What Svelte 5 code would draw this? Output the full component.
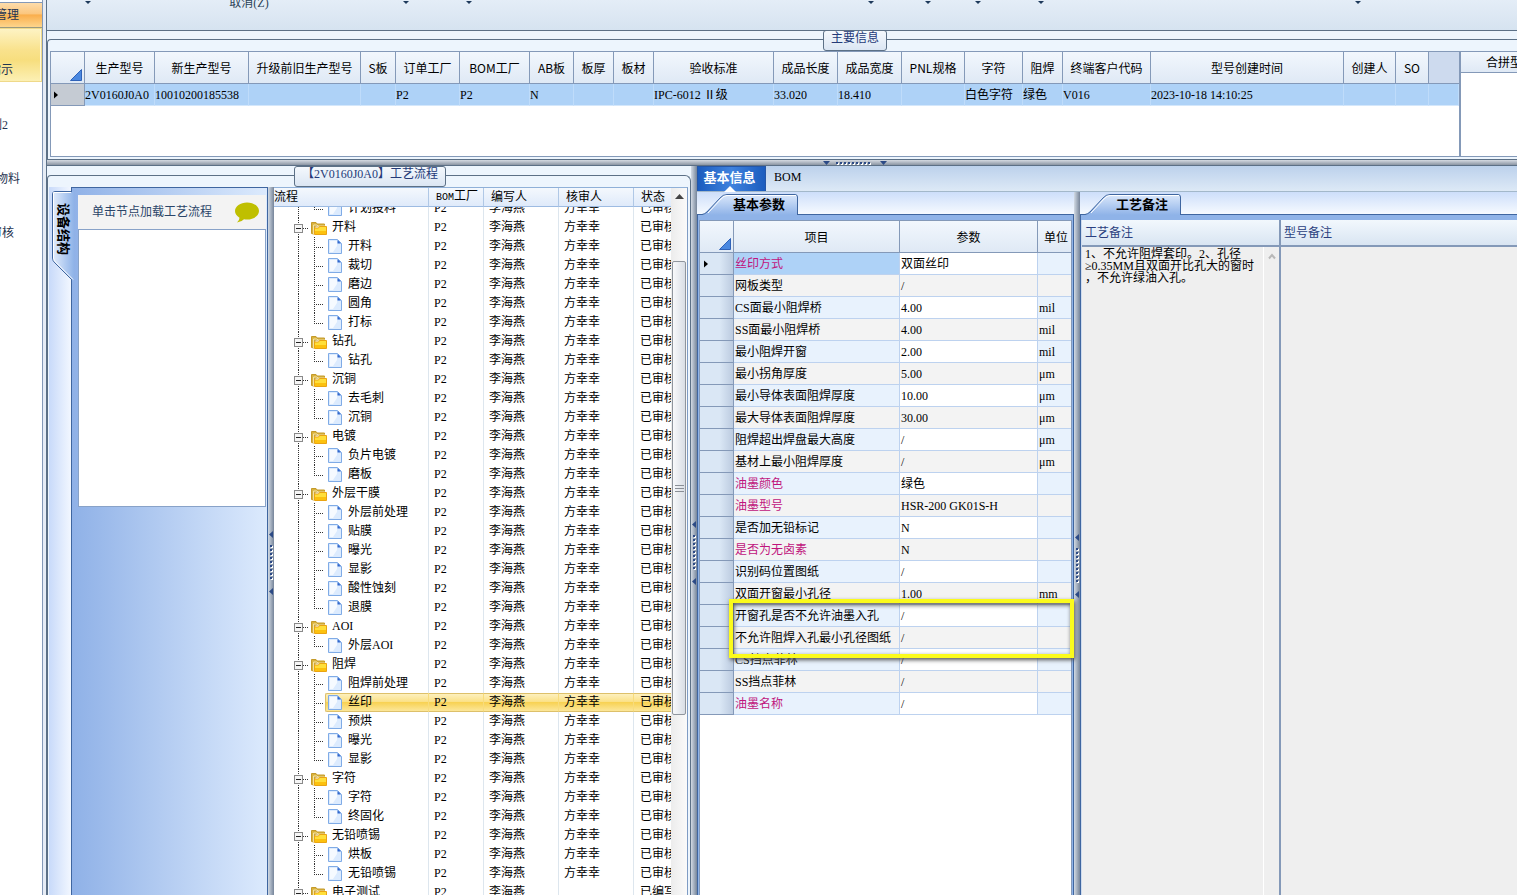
<script>
  const ribbon = [
    { width: 82, caret: true },
    { width: 240, text: '取消(Z)' },
    { width: 74, caret: true },
    { width: 52, caret: true },
    { width: 348 },
    { width: 56, caret: true },
    { width: 58, caret: true },
    { width: 42, caret: true },
    { width: 84, caret: true },
    { width: 240 },
    { width: 70, caret: true },
  ];

  const navItems = ['指示', '例2', '物料', '审核'];

  const mainColumns = [
    { name: '生产型号', width: 70, value: '2V0160J0A0' },
    { name: '新生产型号', width: 94, value: '10010200185538' },
    { name: '升级前旧生产型号', width: 112, value: '' },
    { name: 'S板', width: 35, value: '' },
    { name: '订单工厂', width: 64, value: 'P2' },
    { name: 'BOM工厂', width: 70, value: 'P2' },
    { name: 'AB板', width: 44, value: 'N' },
    { name: '板厚', width: 40, value: '' },
    { name: '板材', width: 40, value: '' },
    { name: '验收标准', width: 120, value: 'IPC-6012 Ⅱ级' },
    { name: '成品长度', width: 64, value: '33.020' },
    { name: '成品宽度', width: 64, value: '18.410' },
    { name: 'PNL规格', width: 63, value: '' },
    { name: '字符', width: 58, value: '白色字符' },
    { name: '阻焊', width: 40, value: '绿色' },
    { name: '终端客户代码', width: 88, value: 'V016' },
    { name: '型号创建时间', width: 193, value: '2023-10-18 14:10:25' },
    { name: '创建人', width: 52, value: '' },
    { name: 'SO', width: 33, value: '' },
  ];

  const processes = [
    { name: '', steps: ['计划投料'] },
    { name: '开料', steps: ['开料', '裁切', '磨边', '圆角', '打标'] },
    { name: '钻孔', steps: ['钻孔'] },
    { name: '沉铜', steps: ['去毛刺', '沉铜'] },
    { name: '电镀', steps: ['负片电镀', '磨板'] },
    { name: '外层干膜', steps: ['外层前处理', '贴膜', '曝光', '显影', '酸性蚀刻', '退膜'] },
    { name: 'AOI', steps: ['外层AOI'] },
    { name: '阻焊', steps: ['阻焊前处理', '丝印', '预烘', '曝光', '显影'] },
    { name: '字符', steps: ['字符', '终固化'] },
    { name: '无铅喷锡', steps: ['烘板', '无铅喷锡'] },
    { name: '电子测试', steps: [], reviewer: '', state: '已编写' },
  ];

  const rows = processes.flatMap((p) => {
    const base = { reviewer: p.reviewer ?? '方幸幸', state: p.state ?? '已审核' };
    const steps = p.steps.map((name, i) => ({ ...base, name, last: i === p.steps.length - 1 }));
    return p.name ? [{ ...base, name: p.name, group: true }, ...steps] : steps;
  });

  let selected = $state('丝印');

  const params = [
    { name: '丝印方式', value: '双面丝印', key: true },
    { name: '网板类型', value: '/' },
    { name: 'CS面最小阻焊桥', value: '4.00', unit: 'mil' },
    { name: 'SS面最小阻焊桥', value: '4.00', unit: 'mil' },
    { name: '最小阻焊开窗', value: '2.00', unit: 'mil' },
    { name: '最小拐角厚度', value: '5.00', unit: 'μm' },
    { name: '最小导体表面阻焊厚度', value: '10.00', unit: 'μm' },
    { name: '最大导体表面阻焊厚度', value: '30.00', unit: 'μm' },
    { name: '阻焊超出焊盘最大高度', value: '/', unit: 'μm' },
    { name: '基材上最小阻焊厚度', value: '/', unit: 'μm' },
    { name: '油墨颜色', value: '绿色', key: true },
    { name: '油墨型号', value: 'HSR-200 GK01S-H', key: true },
    { name: '是否加无铅标记', value: 'N' },
    { name: '是否为无卤素', value: 'N', key: true },
    { name: '识别码位置图纸', value: '/' },
    { name: '双面开窗最小孔径', value: '1.00', unit: 'mm' },
    { name: '开窗孔是否不允许油墨入孔', value: '/' },
    { name: '不允许阻焊入孔最小孔径图纸', value: '/' },
    { name: 'CS挡点菲林', value: '/' },
    { name: 'SS挡点菲林', value: '/' },
    { name: '油墨名称', value: '/', key: true },
  ];

  let processNote = $state('1、不允许阻焊套印。2、孔径\n≥0.35MM且双面开比孔大的窗时\n，不允许绿油入孔。');
  let modelNote = $state('');
</script>

{#snippet corner()}
  <svg class="corner" width="12" height="12" viewBox="0 0 12 12">
    <path d="M11.5 0.5V11.5H0.5Z" fill="#4a88e0" stroke="#2f62b8" />
  </svg>
{/snippet}

{#snippet pointer()}
  <svg class="pointer" width="4" height="8" viewBox="0 0 4 8"><path d="M0 0.5L4 4L0 7.5Z" fill="#000" /></svg>
{/snippet}

{#snippet grip()}
  <div class="splitter">
    <svg width="6" height="64" viewBox="0 0 6 64">
      <path d="M5 0V7L1 3.5Z M5 57V64L1 60.5Z" fill="#2c4a86" />
      <path d="M3 14V48" stroke="#fff" stroke-width="2" stroke-dasharray="2 2" transform="translate(1 1)" />
      <path d="M3 14V48" stroke="#2c4a86" stroke-width="2" stroke-dasharray="2 2" />
    </svg>
  </div>
{/snippet}

{#snippet pageTab(text)}
  <div class="tab-strip">
    <button class="page-tab">
      <svg width="97" height="21" viewBox="0 0 97 21">
        <defs>
          <linearGradient id="tabFill" x1="0" y1="0" x2="0" y2="1">
            <stop offset="0" stop-color="#dbe8fb" />
            <stop offset="1" stop-color="#8fb3e8" />
          </linearGradient>
        </defs>
        <path d="M0 21L3 19L18 4Q21 0.5 25 0.5H93Q95.500 0.5 95.500 3V21Z" fill="url(#tabFill)" />
        <path d="M0 20.500Q3 20 5 18L18 4Q21 0.500 25 0.500H93Q95.500 0.500 95.500 3V21" fill="none" stroke="#3f66a0" />
        <path d="M6 19L19 5Q22 1.500 25 1.500H94" fill="none" stroke="#fff" />
      </svg>
      <span>{text}</span>
    </button>
  </div>
{/snippet}

<div class="app">
  <nav class="sidebar">
    <button class="nav-head">管理</button>
    {#each navItems as item, i}
      <button class="nav-item" class:active={i === 0}>{item}</button>
    {/each}
  </nav>

  <main>
    <div class="ribbon">
      {#each ribbon as item}
        <div class="ribbon-cell" style="width: {item.width}px">
          {#if item.text}
            <button>{item.text}</button>
          {:else if item.caret}
            <button aria-label="展开">
              <svg width="6" height="3" viewBox="0 0 6 3"><path d="M0 0H6L3 3Z" fill="#1e3a5c" /></svg>
            </button>
          {/if}
        </div>
      {/each}
    </div>

    <section class="top-panel">
      <h2 class="legend top-legend">主要信息</h2>
      <div class="group">
        <div class="top-grids">
          <div class="main-grid">
            <table>
              <colgroup>
                <col class="row-head" />
                {#each mainColumns as col}<col style="width: {col.width}px" />{/each}
                <col />
              </colgroup>
              <thead>
                <tr>
                  <th class="corner-cell">{@render corner()}</th>
                  {#each mainColumns as col}<th>{col.name}</th>{/each}
                  <th class="filler"></th>
                </tr>
              </thead>
              <tbody>
                <tr>
                  <td class="marker">{@render pointer()}</td>
                  {#each mainColumns as col}<td>{col.value}</td>{/each}
                  <td></td>
                </tr>
              </tbody>
            </table>
          </div>
          <div class="merge-grid">
            <div class="merge-head">合拼型号</div>
          </div>
        </div>
      </div>
    </section>

    <div class="h-splitter">
      <svg width="64" height="6" viewBox="0 0 64 6">
        <path d="M0 1H7L3.500 5Z M57 1H64L60.500 5Z" fill="#2c4a86" />
        <path d="M14 4H50" stroke="#fff" stroke-width="2" stroke-dasharray="2 2" />
        <path d="M13 3H49" stroke="#2c4a86" stroke-width="2" stroke-dasharray="2 2" />
      </svg>
    </div>

    <div class="lower">
      <section class="flow-panel">
        <h2 class="legend flow-legend">【2V0160J0A0】工艺流程</h2>
        <div class="group flow-group">
          <div class="side-strip">
            <button class="side-tab">
              <svg width="22" height="92" viewBox="0 0 22 92">
                <defs>
                  <linearGradient id="sideFill" x1="0" y1="0" x2="1" y2="0">
                    <stop offset="0" stop-color="#e3edfc" />
                    <stop offset="1" stop-color="#8fb3e8" />
                  </linearGradient>
                </defs>
                <path d="M22 0.500H3Q0.500 0.500 0.500 3V67Q0.500 70 3 72L21 90L22 91Z" fill="url(#sideFill)" />
                <path d="M20 0.500H3Q0.500 0.500 0.500 3V67Q0.500 70 3 72L20 89" fill="none" stroke="#3f66a0" />
                <path d="M19 1.500H1.500V67Q2 70 4 71.500L21 88.500" fill="none" stroke="#fff" />
              </svg>
              <span>设备结构</span>
            </button>
          </div>
          <div class="device">
            <div class="device-head">
              <span>单击节点加载工艺流程</span>
              <svg width="24" height="21" viewBox="0 0 24 21">
                <path d="M12 0.500C18.600 0.500 24 4.200 24 9S18.600 17.500 12 17.500Q10.500 17.500 9 17.200Q6.500 20 2 20.500Q4.500 18.500 4.500 15.700C1.800 14 0 11.700 0 9C0 4.200 5.400 0.500 12 0.500Z" fill="#bfbf00" />
              </svg>
            </div>
            <div class="device-body"></div>
          </div>
          {@render grip()}
          <div class="tree">
            <div class="tree-main">
              <table class="tree-head">
                <colgroup><col class="c-name" /><col class="c-plant" /><col class="c-user" /><col class="c-user" /><col /></colgroup>
                <thead>
                  <tr><th>流程</th><th><span class="mono">BOM</span>工厂</th><th>编写人</th><th>核审人</th><th>状态</th></tr>
                </thead>
              </table>
              <div class="tree-body">
                <table class="tree-rows">
                  <colgroup><col class="c-name" /><col class="c-plant" /><col class="c-user" /><col class="c-user" /><col /></colgroup>
                  <tbody>
                    {#each rows as row}
                      <tr class:selected={row.name === selected} onclick={() => (selected = row.name)}>
                        <td>
                          <div class="node">
                            {#if row.group}
                              <svg width="37" height="19" viewBox="0 0 37 19">
                                <path d="M24.500 0V19M29 10.500H35" stroke="#333" stroke-dasharray="1 1" />
                                <rect x="20.500" y="6.500" width="8" height="8" fill="#f6f6f6" stroke="#8a8a8a" />
                                <path d="M22 10.500H27" stroke="#222" />
                              </svg>
                              <svg width="17" height="19" viewBox="0 0 17 19">
                                <path d="M0.500 15.500V4.500H5L6 6H13.500V8H4L3 16Z" fill="#d9b23c" stroke="#c49a2a" />
                                <path d="M2.500 16V7H6L7 8H14" fill="none" stroke="#f3e3a6" />
                                <path d="M3.500 10H7.500L8.500 8.500H15.500V16.500H3.500Z" fill="#ffdf3a" stroke="#eaa412" />
                                <path d="M4 13H15V16H4Z" fill="#fcc10e" />
                              </svg>
                              <span class="group-name">{row.name}</span>
                            {:else}
                              <svg width="51" height="19" viewBox="0 0 51 19">
                                <path d="M24.500 0V19" stroke="#333" stroke-dasharray="1 1" />
                                <path d={row.last ? 'M40.500 0V11' : 'M40.500 0V19'} stroke="#333" stroke-dasharray="1 1" />
                                <path d="M42 10.500H50" stroke="#333" stroke-dasharray="1 1" />
                              </svg>
                              <span class="leaf">
                                <svg width="14" height="17" viewBox="0 0 14 17">
                                  <path d="M0.500 1.500H9.500L13.500 5.500V15.500H0.500Z" fill="#dcebfe" stroke="#7fabe6" stroke-linejoin="round" />
                                  <path d="M2 3H9V8L5 14H2Z" fill="#f6faff" />
                                  <path d="M9.500 2V5.500H13Z" fill="#2f66cc" />
                                </svg>
                                {row.name}
                              </span>
                            {/if}
                          </div>
                        </td>
                        <td>P2</td>
                        <td>李海燕</td>
                        <td>{row.reviewer}</td>
                        <td>{row.state}</td>
                      </tr>
                    {/each}
                  </tbody>
                </table>
              </div>
            </div>
            <div class="scrollbar">
              <button aria-label="向上滚动">
                <svg width="9" height="5" viewBox="0 0 9 5"><path d="M4.500 0L9 5H0Z" fill="#444" /></svg>
              </button>
              <div class="thumb">
                <svg width="9" height="7" viewBox="0 0 9 7"><path d="M0 0.500H9M0 3.500H9M0 6.500H9" stroke="#8a8f96" /></svg>
              </div>
            </div>
          </div>
        </div>
      </section>

      {@render grip()}

      <section class="info-panel">
        <div class="info-tabs">
          <button class="info-tab active">
            基本信息
            <svg width="12" height="6" viewBox="0 0 12 6"><path d="M6 0L12 6H0Z" fill="#fff" /></svg>
          </button>
          <button class="info-tab">BOM</button>
        </div>
        <div class="info-body">
          <div class="param-panel">
            {@render pageTab('基本参数')}
            <div class="param-frame">
              <div class="param-grid">
                <table>
                  <colgroup><col class="row-head" /><col class="p-name" /><col class="p-value" /><col /></colgroup>
                  <thead>
                    <tr>
                      <th class="corner-cell">{@render corner()}</th>
                      <th>项目</th>
                      <th>参数</th>
                      <th class="unit-head">单位</th>
                    </tr>
                  </thead>
                  <tbody>
                    {#each params as p, i}
                      <tr class:current={i === 0}>
                        <td class="marker">{#if i === 0}{@render pointer()}{/if}</td>
                        <td class:key={p.key}>{p.name}</td>
                        <td class="value">{p.value}</td>
                        <td>{p.unit ?? ''}</td>
                      </tr>
                    {/each}
                  </tbody>
                </table>
                <div class="highlight"></div>
              </div>
            </div>
          </div>

          {@render grip()}

          <div class="note-panel">
            {@render pageTab('工艺备注')}
            <div class="notes">
              <div class="note process">
                <label for="process-note">工艺备注</label>
                <div class="note-body">
                  <textarea id="process-note" bind:value={processNote}></textarea>
                  <button class="note-scroll" aria-label="向上滚动">
                    <svg width="8" height="7" viewBox="0 0 8 7"><path d="M1 5.500L4 2L7 5.500" fill="none" stroke="#b8b8b8" stroke-width="2" /></svg>
                  </button>
                </div>
              </div>
              <div class="note model">
                <label for="model-note">型号备注</label>
                <div class="note-body">
                  <textarea id="model-note" bind:value={modelNote}></textarea>
                </div>
              </div>
            </div>
          </div>
        </div>
      </section>
    </div>
  </main>
</div>

<style>
  :global(body) {
    margin: 0;
    overflow: hidden;
  }

  .app {
    --song: "Liberation Serif", "Noto Sans CJK SC", sans-serif;
    --hei: "Noto Sans CJK SC", sans-serif;
    --line: #8499b8;
    --edge: #5c7086;
    --blue-edge: #3f66a0;
    display: flex;
    height: 100vh;
    overflow: hidden;
    font: 12px/18px var(--song);
    color: #000;
    background: #fff;
  }

  .app :global(*) {
    box-sizing: border-box;
  }

  button {
    margin: 0;
    padding: 0;
    border: 0;
    background: none;
    font: inherit;
    color: inherit;
  }

  svg {
    display: block;
    flex: none;
  }

  table {
    width: 100%;
    table-layout: fixed;
    border-collapse: separate;
    border-spacing: 0;
  }

  th,
  td {
    padding: 0;
    overflow: hidden;
    white-space: nowrap;
    text-align: left;
    font-weight: normal;
  }

  .mono {
    font-family: "Liberation Mono", monospace;
    font-size: 10px;
  }

  /* Sidebar */
  .sidebar {
    flex: none;
    width: 47px;
    padding-top: 2px;
    padding-right: 4px;
    border-right: 1px solid var(--edge);
    background: linear-gradient(90deg, #fff 42px, #8499b8 42px, #8499b8 43px, #e6ecf5 43px);
    color: #1e3350;
  }

  .nav-head,
  .nav-item {
    display: flex;
    justify-content: flex-end;
    width: 42px;
    overflow: hidden;
    white-space: nowrap;
  }

  .nav-head {
    align-items: center;
    height: 26px;
    padding-right: 23px;
    border-top: 1px solid #8499b8;
    border-bottom: 1px solid #9a9a80;
    background: linear-gradient(#fddcab, #fbc67e 45%, #faae4c 50%, #fdd58c);
  }

  .nav-item {
    align-items: flex-end;
    height: 54px;
    padding: 0 28px 2px 0;
  }

  .nav-item:nth-child(3) {
    padding-right: 34px;
  }

  .nav-item:nth-child(4) {
    padding-right: 22px;
  }

  .nav-item.active {
    border: 1px solid #efd98a;
    border-left: 0;
    box-shadow: inset -1px 0 #fff8d8;
    background: linear-gradient(#fdf3c4, #f9e28d 40%, #f7de7e 60%, #fcf0b4);
  }

  main {
    flex: 1;
    min-width: 0;
    display: flex;
    flex-direction: column;
    background: #eaf3fc;
  }

  /* Ribbon */
  .ribbon {
    display: flex;
    flex: none;
    height: 31px;
    overflow: hidden;
    border-bottom: 1px solid var(--edge);
    background: linear-gradient(#e4edf7, #d6e3f0);
  }

  .ribbon-cell {
    flex: none;
    display: flex;
    justify-content: center;
    align-items: flex-start;
    color: #2b4257;
  }

  .ribbon-cell button {
    display: flex;
    height: 18px;
    margin-top: -6px;
  }

  .ribbon-cell svg {
    margin-top: 7px;
  }

  /* Framed groups with a caption on the border */
  .top-panel,
  .flow-panel {
    position: relative;
    padding-top: 8px;
    background: #edf5fd;
  }

  .top-panel {
    flex: none;
    border-bottom: 1px solid var(--edge);
  }

  .group {
    padding: 11px 0 2px 2px;
    border: 1px solid var(--edge);
    border-right: 0;
    border-bottom: 0;
    border-radius: 4px 0 0 0;
  }

  .legend {
    position: absolute;
    z-index: 1;
    top: -1px;
    margin: 0;
    height: 21px;
    padding: 0 7px;
    border: 1px solid var(--edge);
    border-radius: 3px;
    background: linear-gradient(#f4f8fd, #dbe6f3);
    font-size: 12px;
    font-weight: normal;
    line-height: 15px;
    color: #243a78;
  }

  .top-legend {
    left: 776px;
  }

  .flow-legend {
    left: 247px;
    top: 0;
  }

  .top-grids {
    display: flex;
    height: 106px;
    border: 1px solid var(--line);
    border-right: 0;
    background: #fff;
  }

  .main-grid {
    flex: none;
    width: 1408px;
  }

  .row-head {
    width: 34px;
  }

  .main-grid th,
  .param-grid th {
    height: 32px;
    border-right: 1px solid var(--line);
    border-bottom: 1px solid var(--line);
    background: linear-gradient(#f2f7fd, #dfe9f5);
    font-family: var(--hei);
    text-align: center;
  }

  .main-grid .filler {
    border-right: 0;
    background: #cddaee;
  }

  .corner-cell .corner {
    margin: 14px 2px 0 auto;
  }

  .main-grid td {
    height: 22px;
    border-right: 1px solid #bfdcfa;
    border-bottom: 1px solid #d4e7fb;
    background: #aed2f7;
  }

  .main-grid .marker {
    border-color: var(--line);
    background: #c5cbd3;
  }

  .marker .pointer {
    margin-left: 3px;
  }

  .merge-grid {
    flex: 1;
    min-width: 0;
    overflow: hidden;
    border-left: 2px solid var(--line);
  }

  .merge-head {
    height: 21px;
    padding-left: 25px;
    border-bottom: 1px solid var(--line);
    background: linear-gradient(#f2f7fd, #dfe9f5);
    font-family: var(--hei);
    line-height: 20px;
    white-space: nowrap;
  }

  .h-splitter {
    flex: none;
    display: flex;
    align-items: center;
    height: 6px;
    padding-left: 776px;
    border-bottom: 1px solid var(--edge);
    background: linear-gradient(#d5dae2, #8b95a3);
  }

  .lower {
    flex: 1;
    min-height: 0;
    display: flex;
  }

  .splitter {
    flex: none;
    display: flex;
    align-items: center;
    width: 6px;
    padding-top: 44px;
    background: linear-gradient(90deg, #d2dae4, #76859a);
  }

  /* Process flow */
  .flow-panel {
    flex: none;
    display: flex;
    width: 644px;
    padding-top: 9px;
  }

  .flow-group {
    flex: 1;
    display: flex;
    min-width: 0;
    padding: 11px 2px 0 1px;
    border-right: 1px solid var(--edge);
    border-radius: 4px 6px 0 0;
  }

  .side-strip {
    flex: none;
    width: 22px;
    padding: 4px 0 0 3px;
    background: linear-gradient(90deg, #c8dafa, #f2f7ff);
  }

  .side-tab {
    display: grid;
    position: relative;
    z-index: 1;
    width: 22px;
  }

  .side-tab svg,
  .side-tab span {
    grid-area: 1 / 1;
  }

  .side-tab span {
    width: 22px;
    padding-top: 12px;
    writing-mode: vertical-rl;
    text-orientation: sideways;
    font-size: 13px;
    font-weight: bold;
    line-height: 22px;
    text-align: left;
  }

  .device {
    flex: none;
    width: 197px;
    padding: 7px 1px 0 6px;
    border: 1px solid var(--blue-edge);
    border-bottom: 0;
    background: linear-gradient(90deg, #8fb1e7, #dceafd);
  }

  .device-head {
    display: flex;
    justify-content: space-between;
    align-items: center;
    height: 34px;
    padding: 0 7px 0 14px;
    background: #f3f3f3;
    color: #2b4568;
  }

  .device-body {
    height: 278px;
    border: 1px solid #88a2c8;
    background: #fff;
  }

  .tree {
    flex: 1;
    display: flex;
    min-width: 0;
    border-top: 1px solid #8fb0d8;
    border-right: 1px solid #7f9cc4;
    background: #fff;
  }

  .tree-main {
    flex: 1;
    display: flex;
    flex-direction: column;
    min-width: 0;
  }

  .c-name {
    width: 155px;
  }

  .c-plant {
    width: 55px;
  }

  .c-user {
    width: 75px;
  }

  .tree-head th {
    height: 18px;
    padding-left: 7px;
    border-right: 1px solid #b0c8e6;
    border-bottom: 1px solid #9dbbe2;
    background: linear-gradient(#f4f8fd, #dfeafa);
    line-height: 16px;
  }

  .tree-head th:first-child {
    padding-left: 0;
  }

  .tree-head th:last-child,
  .tree-rows td:last-child {
    border-right: 0;
  }

  .tree-body {
    flex: 1;
    min-height: 0;
    overflow: hidden;
  }

  .tree-rows {
    margin-top: -8px;
  }

  .tree-rows td {
    height: 19px;
    padding-left: 5px;
    border-right: 1px solid #dde6ee;
    line-height: 19px;
    vertical-align: top;
  }

  .tree-rows td:first-child {
    padding-left: 0;
  }

  .tree-rows td:last-child {
    padding-left: 6px;
  }

  .node,
  .leaf {
    display: flex;
  }

  .group-name {
    padding-left: 4px;
  }

  .leaf {
    flex: 1;
    gap: 6px;
    height: 19px;
    padding-left: 2px;
    border: 1px solid transparent;
    border-right: 0;
  }

  .selected .leaf,
  .selected td:not(:first-child) {
    border-top: 1px solid #ddc06a;
    border-bottom: 1px solid #ddc06a;
    background: linear-gradient(#fdf0be, #fbe187 45%, #f8d254 50%, #fce79a);
  }

  .selected .leaf {
    border-left-color: #ddc06a;
    border-radius: 2px 0 0 2px;
  }

  .leaf,
  .tree-rows .selected td:not(:first-child) {
    line-height: 17px;
  }

  .tree-rows .selected td {
    border-right-color: #f8dc7c;
  }

  .scrollbar {
    flex: none;
    width: 16px;
    padding: 6px 1px 0;
    background: linear-gradient(90deg, #ececec, #fafafa);
  }

  .scrollbar button {
    display: flex;
    justify-content: center;
    width: 100%;
    height: 67px;
  }

  .thumb {
    display: flex;
    justify-content: center;
    align-items: center;
    height: 454px;
    border: 1px solid #8f959d;
    border-radius: 2px;
    background: linear-gradient(90deg, #f8f9fb, #d9dee5);
  }

  /* Basic info */
  .info-panel {
    flex: 1;
    display: flex;
    flex-direction: column;
    min-width: 0;
  }

  .info-tabs {
    flex: none;
    display: flex;
    height: 26px;
    border-bottom: 1px solid #a3b8ca;
    background: linear-gradient(#bcd1ec, #dde9f6);
  }

  .info-tab {
    padding: 0 8px 4px;
  }

  .info-tab.active {
    display: flex;
    flex-direction: column;
    align-items: center;
    justify-content: space-between;
    width: 69px;
    padding: 2px 4px 0 0;
    border: 1px solid #2456a8;
    border-bottom: 0;
    background: linear-gradient(90deg, #1b5cbe, #3f82de 50%, #1b5cbe);
    font-size: 13px;
    font-weight: bold;
    line-height: 17px;
    color: #fff;
  }

  .info-body {
    flex: 1;
    display: flex;
    min-height: 0;
  }

  .param-panel {
    flex: none;
    display: flex;
    flex-direction: column;
    width: 377px;
  }

  .tab-strip {
    flex: none;
    height: 23px;
    padding: 2px 5px 0;
    border-bottom: 1px solid var(--blue-edge);
    background: linear-gradient(#cddefa, #f6faff);
  }

  .page-tab {
    display: grid;
    font-size: 13px;
    font-weight: bold;
  }

  .page-tab svg,
  .page-tab span {
    grid-area: 1 / 1;
  }

  .page-tab span {
    padding-left: 31px;
    text-align: left;
    line-height: 21px;
  }

  .param-frame {
    flex: 1;
    display: flex;
    padding: 5px 1px 0;
    border: 1px solid var(--blue-edge);
    border-top: 0;
    border-bottom: 0;
    background: #8fb3e8;
  }

  .param-grid {
    position: relative;
    flex: 1;
    border: 1px solid var(--line);
    border-bottom: 0;
    background: #fff;
  }

  .p-name {
    width: 166px;
  }

  .p-value {
    width: 138px;
  }

  .param-grid .unit-head {
    padding-left: 6px;
    text-align: left;
  }

  .param-grid th:last-child,
  .param-grid td:last-child {
    border-right: 0;
  }

  .param-grid td {
    height: 22px;
    padding-left: 1px;
    border-right: 1px solid #bdd2ef;
    border-bottom: 1px solid #bdd2ef;
    background: #e8f2fd;
  }

  .param-grid tr:nth-child(odd) .value {
    background: #fff;
  }

  .param-grid tr:nth-child(even) td {
    background: #f3f3f3;
  }

  .param-grid tr .marker,
  .param-grid tr:nth-child(even) .marker {
    border-color: var(--line);
    background: linear-gradient(90deg, #dae7f5 60%, #bccbe0);
  }

  .param-grid .key {
    color: #c0147c;
  }

  .param-grid .current .key {
    background: #aed2f7;
  }

  .highlight {
    position: absolute;
    z-index: 2;
    top: 378px;
    left: 29px;
    width: 345px;
    height: 59px;
    border: 4px solid #fbfb1c;
    box-shadow: 1px 2px 4px #555, inset 1px 2px 4px #555;
    pointer-events: none;
  }

  /* Notes */
  .note-panel {
    flex: 1;
    display: flex;
    flex-direction: column;
    min-width: 0;
  }

  .notes {
    flex: 1;
    display: flex;
    padding-top: 5px;
    border-left: 1px solid var(--blue-edge);
    background: #8fb3e8;
  }

  .note {
    display: flex;
    flex-direction: column;
  }

  .note.process {
    flex: none;
    width: 200px;
    border-left: 1px solid #cfdcee;
    border-right: 2px solid var(--line);
  }

  .note.model {
    flex: 1;
    min-width: 0;
  }

  .note label {
    height: 27px;
    padding-left: 3px;
    border-bottom: 2px solid var(--line);
    background: linear-gradient(#f2f8fd, #d9e5f2);
    line-height: 26px;
    color: #2a3f80;
  }

  .note-body {
    flex: 1;
    display: flex;
    background: #efefef;
  }

  textarea {
    flex: 1;
    min-width: 0;
    padding: 1px 0 0 3px;
    border: 0;
    outline: 0;
    resize: none;
    overflow: hidden;
    background: none;
    font: 12px/12px var(--song);
    white-space: pre;
    color: #000;
  }

  .note-scroll {
    flex: none;
    display: flex;
    justify-content: center;
    width: 16px;
    padding-top: 6px;
    border-left: 1px solid #fff;
  }
</style>
